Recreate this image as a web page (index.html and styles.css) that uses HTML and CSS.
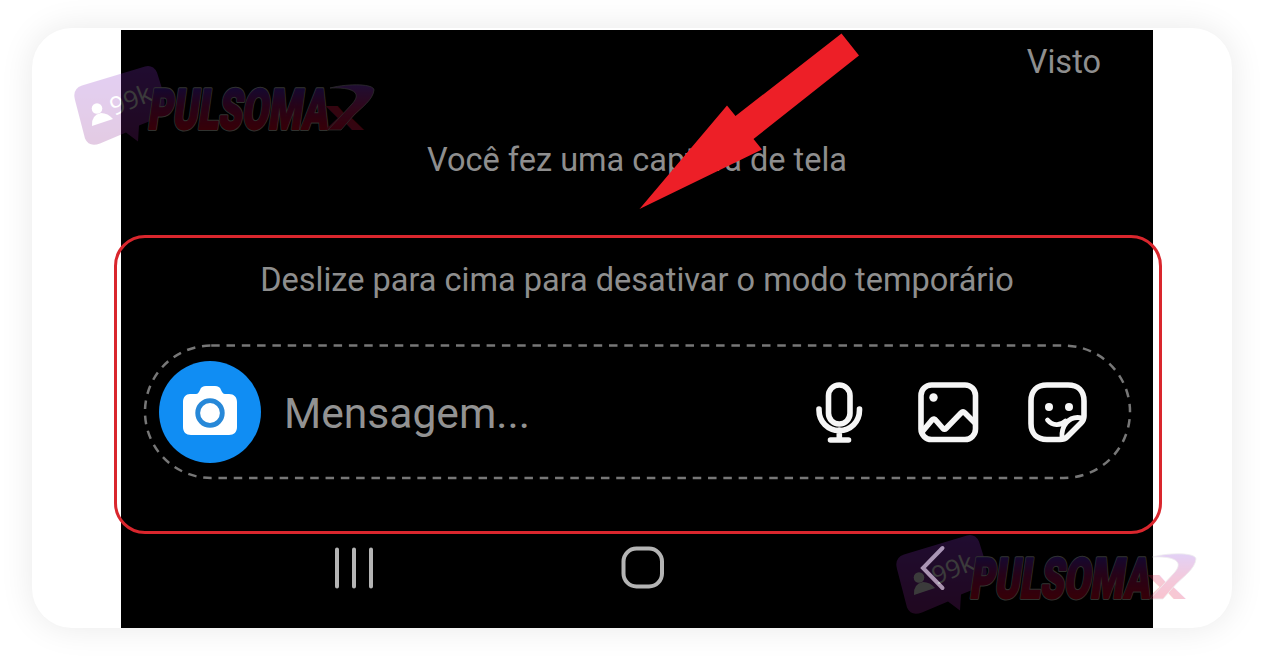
FILE: index.html
```html
<!DOCTYPE html>
<html lang="pt-BR">
<head>
<meta charset="utf-8">
<title>Modo temporário</title>
<link rel="stylesheet" href="styles.css">
</head>
<body>
<main class="card">
  <section class="screen">
    <p class="seen"><span>Visto</span></p>
    <p class="notice"><span>Você fez uma captura de tela</span></p>
    <p class="hint"><span>Deslize para cima para desativar o modo temporário</span></p>
    <div class="composer">
      <svg class="outline" width="990" height="136" viewBox="0 0 990 136"><rect x="2" y="1.5" width="985" height="132.5" rx="66.2"/></svg>
      <span class="camera">
        <svg width="56" height="50" viewBox="0 0 56 50"><path fill="#fff" d="M8 8h6c2 0 3-2 4-4 1-3 3-4 6-4h9c3 0 5 1 6 4 1 2 2 4 4 4h4c5 0 8 3 8 8v25c0 5-3 8-8 8H9c-5 0-8-3-8-8V16c0-5 3-8 7-8z"/><circle cx="28" cy="27" r="12.3" fill="#fff" stroke="#2788d8" stroke-width="4.8"/></svg>
      </span>
      <span class="placeholder">Mensagem...</span>
      <span class="tools">
        <svg width="50" height="64" viewBox="0 0 50 64"><rect x="13.500" y="4" width="21.500" height="39" rx="10.700"/><path d="M4 28v1c0 12 9 20.500 20.300 20.500S44.500 41 44.500 29v-1M24.300 49v10M15.500 59h18"/></svg>
        <svg width="64" height="64" viewBox="0 0 64 64"><rect x="4" y="4" width="54.500" height="54.500" rx="10.500"/><circle class="dot" cx="16.500" cy="16.500" r="4.200"/><path d="M5 51l10-12Q17 37 19 39.500L26 47.500q1.500 1.500 3 0L44 32q2-2 4 0l10 10"/></svg>
        <svg width="64" height="64" viewBox="0 0 64 64"><path d="M20 4h21c10 0 16 6 16 16v15c0 3-1 5-3 7L40 56c-2 2-4 2.500-7 2.500H20c-10 0-16-6-16-16V20C4 10 10 4 20 4z"/><path class="fine" d="M35 57C34 46 41 34 55 37M20.500 39c5 6 13 6 18 1"/><circle class="dot" cx="22" cy="26" r="4"/><circle class="dot" cx="42" cy="26" r="4"/></svg>
      </span>
    </div>
    <nav class="navbar">
      <svg width="42" height="44" viewBox="0 0 42 44"><path d="M4 3.500v37M21 3.500v37M38 3.500v37"/></svg>
      <svg width="46" height="46" viewBox="0 0 46 46"><rect x="3.500" y="3.500" width="38.500" height="38" rx="13"/></svg>
      <svg width="28" height="46" viewBox="0 0 28 46"><path d="M23.500 3L4 23 23.500 43"/></svg>
    </nav>
  </section>
</main>

<svg class="arrow" width="224" height="180" viewBox="0 0 224 180"><path d="M205.500 3.500L223 25.500 117.500 109 126 119.500 3.500 179 91 75.500 99.500 86z"/></svg>
<div class="highlight"></div>

<svg class="mark mark-top" width="304" height="84" viewBox="0 0 304 84">
  <defs>
    <linearGradient id="tag" x1="0" y1="0" x2="0" y2="1"><stop offset="0" stop-color="#8b35cf"/><stop offset="1" stop-color="#8a238a"/></linearGradient>
    <linearGradient id="word" gradientUnits="userSpaceOnUse" x1="0" y1="-41" x2="0" y2="0"><stop offset="0" stop-color="#5a26d0"/><stop offset=".45" stop-color="#a50c66"/><stop offset="1" stop-color="#e80024"/></linearGradient>
    <linearGradient id="swoosh" gradientUnits="userSpaceOnUse" x1="0" y1="20" x2="0" y2="64"><stop offset="0" stop-color="#8a3bd4"/><stop offset=".5" stop-color="#cb1e72"/><stop offset="1" stop-color="#e70032"/></linearGradient>
    <g id="logo">
      <path fill="url(#tag)" d="M8 19.500L71 0.500q8-2 12 6l5 16q8 25-8 31l-15 6-1 16-12-9-26 11q-11 4-15-5L1 34Q-2 23 8 19.500z"/>
      <g fill="#fff"><circle cx="23" cy="42.500" r="5.300"/><path d="M18 60q-1-11 9-13 7 0 12 6z"/></g>
      <text class="count" transform="translate(40 50) rotate(-22)" textLength="43" lengthAdjust="spacingAndGlyphs">99k</text>
      <g transform="translate(73 62.500) skewX(-8)">
        <text class="wordmark" textLength="180" lengthAdjust="spacingAndGlyphs" stroke="#d0d8cc" stroke-width="3.800">PULSOMA</text>
        <text class="wordmark" textLength="180" lengthAdjust="spacingAndGlyphs" stroke="url(#word)" stroke-width="1.800" aria-hidden="true">PULSOMA</text>
      </g>
      <text class="cross" x="251" y="64" textLength="39" lengthAdjust="spacingAndGlyphs">X</text>
      <path fill="url(#swoosh)" stroke="#bbb" stroke-width=".8" d="M254 64L278 38C288 27 280 21 256 22 276 17 300 18 300 24 299 34 287 42 280 49L267 64z"/>
    </g>
  </defs>
  <use href="#logo"/>
</svg>
<svg class="mark mark-bottom" width="304" height="84" viewBox="0 0 304 84"><use href="#logo"/></svg>
</body>
</html>
```
FILE: styles.css
```css
* { box-sizing: border-box; }
body {
  margin: 0;
  width: 1264px;
  height: 664px;
  padding: 28px 32px 36px;
  overflow: hidden;
  background: #fff;
  font-family: Roboto, "Liberation Sans", sans-serif;
}
p { margin: 0; }
svg { display: block; overflow: visible; }
.card {
  height: 600px;
  padding: 2px 79px 0 89px;
  border-radius: 40px;
  background: #fff;
  box-shadow: 0 0 34px rgba(0, 0, 0, .09);
}
.screen {
  display: flex;
  flex-direction: column;
  height: 598px;
  background: #000;
  color: #8e8e8e;
  font-size: 32.5px;
  line-height: 40px;
}
.seen { padding: 12px 52px 0 0; text-align: right; }
.notice { padding-top: 58px; text-align: center; }
.hint { padding-top: 80px; text-align: center; }
.composer {
  display: grid;
  grid-template-columns: 102px 1fr auto;
  align-items: center;
  width: 990px;
  height: 136px;
  margin: 44px 0 0 22px;
  padding: 0 42px 0 16px;
}
.composer > * { grid-row: 1; }
.outline { grid-column: 1; align-self: start; margin-left: -16px; }
.outline rect { fill: none; stroke: #777; stroke-width: 2.5; stroke-dasharray: 8.5 6.8; }
.camera {
  grid-column: 1;
  display: grid;
  place-items: center;
  width: 102px;
  height: 102px;
  border-radius: 50%;
  background: #108df3;
}
.camera svg { margin-bottom: 2px; }
.placeholder { grid-column: 2; padding: 2px 0 0 23px; font-size: 42.6px; color: #929292; }
.tools { grid-column: 3; display: flex; padding-top: 2px; }
.tools svg { fill: none; stroke: #f6f6f6; stroke-width: 5.6; stroke-linecap: round; stroke-linejoin: round; }
.tools svg + svg { margin-left: 52px; }
.tools svg + svg + svg { margin-left: 46px; }
.tools .dot { fill: #f6f6f6; stroke: none; }
.tools .fine { stroke-width: 4.8; }
.navbar {
  display: flex;
  align-items: center;
  margin-top: 65px;
  padding-left: 212px;
}
.navbar svg { fill: none; stroke: #b4b4b4; stroke-width: 4; stroke-linecap: round; }
.navbar svg + svg { margin-left: 245px; }
.navbar svg + svg + svg { margin-left: 253px; }
.arrow { position: absolute; left: 636px; top: 30px; fill: #ed1f27; }
.highlight {
  position: absolute;
  left: 114px;
  top: 235px;
  width: 1048px;
  height: 299px;
  border: 3px solid #d9262d;
  border-radius: 31px;
}
.mark { position: absolute; opacity: .23; }
.mark-top { left: 74px; top: 66px; }
.mark-bottom { left: 896px; top: 535px; }
.count { font: 500 25px "Open Sans", sans-serif; fill: #fff; }
.wordmark {
  font: 900 56px Roboto, "Liberation Sans", sans-serif;
  fill: url(#word);
  stroke-linejoin: round;
}
.cross {
  font: 900 33px Roboto, "Liberation Sans", sans-serif;
  fill: #df1748;
}
```
